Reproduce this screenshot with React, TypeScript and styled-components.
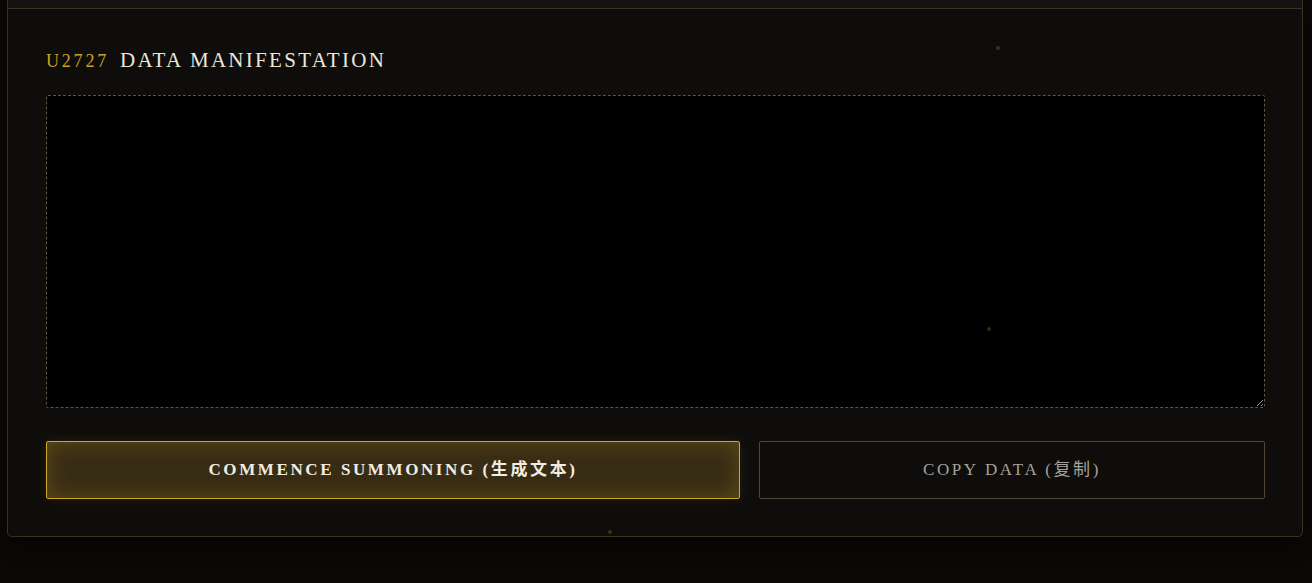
import React from 'react';
import styled, { createGlobalStyle } from 'styled-components';

const GlobalStyle = createGlobalStyle`
  html, body {
    margin: 0;
    padding: 0;
    background: #0a0907;
  }
  * {
    box-sizing: border-box;
  }
`;

const Page = styled.div`
  position: relative;
  min-height: 583px;
  padding: 0 9px 0 7px;
  background: #0a0907;
  font-family: 'Liberation Serif', 'Noto Sans CJK SC', serif;
`;

const Panel = styled.section`
  background: #0f0d0b;
  border: 1px solid #3a3120;
  border-top: none;
  border-radius: 0 0 5px 5px;
  box-shadow: 0 6px 18px rgba(0, 0, 0, 0.6);
`;

const PanelTop = styled.div`
  height: 9px;
  background: #141311;
  border-bottom: 1px solid #3b3322;
`;

const Body = styled.div`
  padding: 39px 37px 37px 38px;
  display: flex;
  flex-direction: column;
`;

const Heading = styled.h2`
  margin: 0;
  display: flex;
  align-items: baseline;
  gap: 11px;
  font-weight: 400;
  line-height: 24px;
`;

const Code = styled.span`
  color: #c9a227;
  font-size: 18px;
  letter-spacing: 2.8px;
`;

const Title = styled.span`
  color: #ece6da;
  font-size: 21px;
  letter-spacing: 2.3px;
  text-transform: uppercase;
`;

const Output = styled.textarea`
  display: block;
  margin-top: 22px;
  width: 100%;
  height: 313px;
  background: #000;
  border: 1px dashed #5f5541;
  border-radius: 2px;
  outline: none;
  color: #d8d0c0;
  font-family: 'Liberation Mono', monospace;
  font-size: 14px;
  padding: 14px;
  resize: vertical;
`;

const Actions = styled.div`
  margin-top: 33px;
  display: grid;
  grid-template-columns: 694fr 506fr;
  gap: 19px;
`;

const Button = styled.button<{ $primary?: boolean }>`
  height: 58px;
  padding: 0;
  border-radius: 2px;
  cursor: pointer;
  font-family: 'Liberation Serif', 'Noto Sans CJK SC', serif;
  font-size: 17px;
  line-height: 20px;
  letter-spacing: 2.6px;
  font-weight: ${p => (p.$primary ? 700 : 400)};
  color: ${p => (p.$primary ? '#f3ece0' : '#a6a199')};
  background: ${p => (p.$primary ? '#372c14' : 'transparent')};
  border: 1px solid ${p => (p.$primary ? '#cfa52c' : '#514832')};
  box-shadow: ${p =>
    p.$primary
      ? 'inset 0 0 22px rgba(201, 162, 39, 0.28), 0 0 12px rgba(201, 162, 39, 0.12)'
      : 'none'};
`;

const Mote = styled.span<{ $size: number }>`
  position: absolute;
  width: ${p => p.$size}px;
  height: ${p => p.$size}px;
  border-radius: 50%;
  background: rgba(201, 162, 39, 0.25);
  pointer-events: none;
`;

const motes = [
  { x: 996, y: 46, s: 4 },
  { x: 987, y: 327, s: 4 },
  { x: 608, y: 530, s: 4 },
];

export default function App() {
  return (
    <>
      <GlobalStyle />
      <Page>
        <Panel>
          <PanelTop />
          <Body>
            <Heading>
              <Code>U2727</Code>
              <Title>Data Manifestation</Title>
            </Heading>
            <Output readOnly />
            <Actions>
              <Button $primary>COMMENCE SUMMONING (生成文本)</Button>
              <Button>COPY DATA (复制)</Button>
            </Actions>
          </Body>
        </Panel>
        {motes.map((m, i) => (
          <Mote key={i} $size={m.s} style={{ left: m.x, top: m.y }} />
        ))}
      </Page>
    </>
  );
}
